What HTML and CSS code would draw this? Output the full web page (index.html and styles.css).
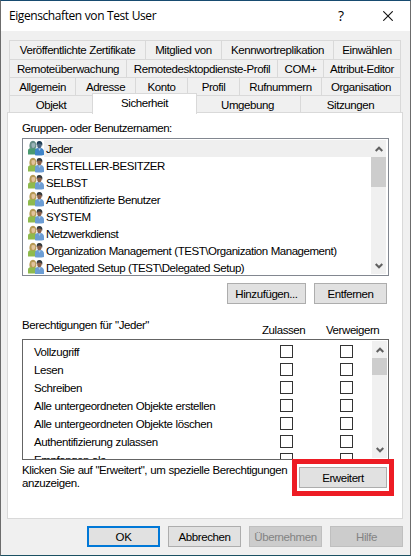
FILE: index.html
```
<!DOCTYPE html>
<html lang="de">
<head>
<meta charset="utf-8">
<title>Eigenschaften von Test User</title>
<link rel="stylesheet" href="styles.css">
</head>
<body>
<svg width="0" height="0" class="defs">
  <symbol id="users" viewBox="0 0 16 16">
    <path class="body-a" d="M0 14.5V10.5Q0 8.5 3 8L7 8Q9.5 9 9.5 14.5Z"/>
    <path class="hair-a" d="M1.5 7.5Q1 1 5 .8Q8.8 1 8.3 7.5L6.5 8.6H3Z"/>
    <path class="face-a" d="M3.5 3.5Q5 2.4 7.2 3.6L7.2 6Q6.4 8.2 5 8Q3.5 7.5 3.5 5.5Z"/>
    <path class="body-b" d="M7 15.3V11Q7 8.5 10 8.1H13Q16 9 16 12V15Q12 16 7 15.3Z"/>
    <path class="hair-b" d="M8.7 5Q8.2 1 11.3 1Q15 1 14.3 5.5L12 5Z"/>
    <path class="face-b" d="M9 4Q11.5 3 13.8 4.2L13.3 7Q12 9.5 10.3 8.3Q9 7 9 4Z"/>
    <path class="collar" d="M10.2 8.4L11.6 11L12.9 8.3Z"/>
  </symbol>
  <symbol id="up" viewBox="0 0 8 6"><path d="M.7 5L4 1.7L7.3 5" fill="none" stroke="#606060" stroke-width="2"/></symbol>
  <symbol id="down" viewBox="0 0 8 6"><path d="M.7 1L4 4.3L7.3 1" fill="none" stroke="#606060" stroke-width="2"/></symbol>
</svg>
<div class="window">
  <header class="titlebar">
    <span class="title">Eigenschaften von Test User</span>
    <span class="help">?</span>
    <svg class="close" viewBox="0 0 10 10"><path d="M.3 .3L9.7 9.7M9.7 .3L.3 9.7" stroke="#111" stroke-width="1.1"/></svg>
  </header>
  <nav class="tabs">
    <div class="row r1"><span class="tab">Veröffentlichte Zertifikate</span><span class="tab">Mitglied von</span><span class="tab">Kennwortreplikation</span><span class="tab">Einwählen</span></div>
    <div class="row r2"><span class="tab">Remoteüberwachung</span><span class="tab">Remotedesktopdienste-Profil</span><span class="tab">COM+</span><span class="tab">Attribut-Editor</span></div>
    <div class="row r3"><span class="tab">Allgemein</span><span class="tab">Adresse</span><span class="tab">Konto</span><span class="tab">Profil</span><span class="tab">Rufnummern</span><span class="tab">Organisation</span></div>
    <div class="row r4"><span class="tab">Objekt</span><span class="tab active">Sicherheit</span><span class="tab">Umgebung</span><span class="tab">Sitzungen</span></div>
  </nav>
  <main class="panel">
    <div class="label">Gruppen- oder Benutzernamen:</div>
    <div class="list">
      <div class="users">
        <div class="user everyone"><svg><use href="#users"/></svg><span>Jeder</span></div>
        <div class="user"><svg><use href="#users"/></svg><span>ERSTELLER-BESITZER</span></div>
        <div class="user"><svg><use href="#users"/></svg><span>SELBST</span></div>
        <div class="user"><svg><use href="#users"/></svg><span>Authentifizierte Benutzer</span></div>
        <div class="user"><svg><use href="#users"/></svg><span>SYSTEM</span></div>
        <div class="user"><svg><use href="#users"/></svg><span>Netzwerkdienst</span></div>
        <div class="user"><svg><use href="#users"/></svg><span>Organization Management (TEST\Organization Management)</span></div>
        <div class="user"><svg><use href="#users"/></svg><span>Delegated Setup (TEST\Delegated Setup)</span></div>
      </div>
      <div class="scroll"><svg class="arrow"><use href="#up"/></svg><div class="thumb"></div><svg class="arrow last"><use href="#down"/></svg></div>
    </div>
    <div class="actions"><button class="add">Hinzufügen...</button><button>Entfernen</button></div>
    <div class="perm-head"><span class="for">Berechtigungen für "Jeder"</span><span class="allow">Zulassen</span><span class="deny">Verweigern</span></div>
    <div class="list perms">
      <div class="perm-rows">
        <div class="perm"><span>Vollzugriff</span><i></i><i></i></div>
        <div class="perm"><span>Lesen</span><i></i><i></i></div>
        <div class="perm"><span>Schreiben</span><i></i><i></i></div>
        <div class="perm"><span>Alle untergeordneten Objekte erstellen</span><i></i><i></i></div>
        <div class="perm"><span>Alle untergeordneten Objekte löschen</span><i></i><i></i></div>
        <div class="perm"><span>Authentifizierung zulassen</span><i></i><i></i></div>
        <div class="perm"><span>Empfangen als</span><i></i><i></i></div>
      </div>
      <div class="scroll"><svg class="arrow"><use href="#up"/></svg><div class="thumb"></div><svg class="arrow last"><use href="#down"/></svg></div>
    </div>
    <div class="advanced">
      <p>Klicken Sie auf "Erweitert", um spezielle Berechtigungen<br>anzuzeigen.</p>
      <div class="mark"><button>Erweitert</button></div>
    </div>
  </main>
  <footer class="footer"><button class="default">OK</button><button>Abbrechen</button><button disabled>Übernehmen</button><button disabled>Hilfe</button></footer>
</div>
</body>
</html>
```
FILE: styles.css
```
* { box-sizing: border-box; }
body { margin: 0; width: 411px; height: 556px; overflow: hidden; font: 11.5px/14px "Liberation Sans", Arial, sans-serif; letter-spacing: -0.42px; word-spacing: 0.3px; color: #000; }
.defs { position: absolute; }
.window { width: 411px; height: 556px; background: #f0f0f0; border: 1px solid #6c6c6c; border-top-color: #174b70; border-bottom-color: #1a5062; white-space: nowrap; }
.titlebar { height: 30px; background: #fff; display: flex; align-items: center; padding: 0 17px 0 8px; }
.title { font: 12px/16px "Open Sans", "Noto Sans", sans-serif; letter-spacing: -0.42px; flex: 1; }
.help { font: 14px/16px "Open Sans", "Noto Sans", sans-serif; width: 45px; }
.close { width: 10px; height: 10px; }

.tabs { margin: 9px 9px 0 8px; border: 1px solid #d9d9d9; border-bottom: 0; border-left: 0; height: 72px; }
.row { display: grid; height: 18px; }
.row + .row .tab { border-top: 1px solid #d9d9d9; }
.row .tab.active { border: 1px solid #d9d9d9; border-bottom: 0; background: #fff; position: relative; top: -2px; height: 21px; margin-right: -1px; z-index: 1; line-height: 18px; }
.tab { border-left: 1px solid #d9d9d9; text-align: center; line-height: 18px; height: 18px; }
.r1 { grid-template-columns: 136px 76px 112px 1fr; }
.r2 { grid-template-columns: 117px 151px 46px 1fr; }
.r3 { grid-template-columns: 66px 60px 52px 52px 82px 1fr; }
.r4 { grid-template-columns: 83px 104px 104px 1fr; }
.r4 .tab:nth-child(3) { padding-right: 2px; }

.panel { margin: 0 7px 0 6px; height: 407px; border: 1px solid #d9d9d9; background: #fff; padding: 8px 12px 0 14px; }
.label { height: 17px; line-height: 15px; letter-spacing: -0.47px; }
.list { width: 367px; height: 138px; border: 1px solid #828790; padding: 1px; display: flex; justify-content: space-between; overflow: hidden; }
.users { width: 348px; overflow: hidden; }
.user { height: 17px; display: flex; padding-left: 4px; letter-spacing: -0.46px; }
.user svg { width: 16px; height: 16px; flex: none; }
.user span { flex: 1; padding-left: 2px; line-height: 18px; }
.user.everyone span { background: #efefef; }
.body-a { fill: var(--body-a, #8fba4d); }
.hair-a { fill: var(--hair-a, #b69a55); }
.face-a { fill: var(--face-a, #e2c39d); }
.body-b { fill: var(--body-b, #6c9dd4); }
.hair-b { fill: var(--hair-b, #343a3c); }
.face-b { fill: var(--face-b, #895f49); }
.collar { fill: #a9c9e8; }
.everyone { --body-a: #4a9a70; --hair-a: #648c86; --face-a: #9bb3b8; --body-b: #3f84c8; --hair-b: #1e3e55; --face-b: #4a637c; }
.scroll { width: 15px; margin-right: 1px; background: #f0f0f0; display: flex; flex-direction: column; align-items: center; }
.arrow { width: 8px; height: 6px; margin: 6px 0 5px; flex: none; }
.arrow.last { margin: auto 0 5px; }
.thumb { width: 15px; height: 30px; background: #cdcdcd; }

button { font: inherit; letter-spacing: inherit; color: #000; width: 73px; height: 21px; padding: 0; background: #e1e1e1; border: 1px solid #adadad; flex: none; }
button:disabled { background: #ccc; border-color: #bfbfbf; color: #838383; }
.actions { display: flex; justify-content: flex-end; gap: 8px; padding: 7px 3px 0 0; height: 40px; }
.actions .add { width: 79px; }
.perm-head { display: flex; height: 23px; }
.for { width: 240px; line-height: 18px; }
.allow, .deny { padding-top: 7px; }
.allow { width: 64px; }
.list.perms { height: 121px; border-color: #646464; }
.perm-rows { width: 340px; padding-top: 2px; }
.perm { height: 18px; display: grid; grid-template-columns: 246px 60px 1fr; padding: 2px 0 0 10px; }
.perm i { width: 13px; height: 13px; border: 1px solid #333; }
.perms .scroll { margin-right: 0; }
.perms .thumb { height: 17px; }
.advanced { display: flex; justify-content: space-between; }
.advanced p { margin: 4px 0 0; line-height: 13px; }
.mark { border: 5px solid #ed1c24; width: 102px; height: 37px; margin: -1px -4px 0 0; padding: 3px 2px; position: relative; z-index: 1; flex: none; }
.mark button { width: 88px; display: block; }
.footer { display: flex; justify-content: flex-end; gap: 8px; padding: 7px 7px 0 0; }
.footer .default { border: 2px solid #0078d7; }
```
